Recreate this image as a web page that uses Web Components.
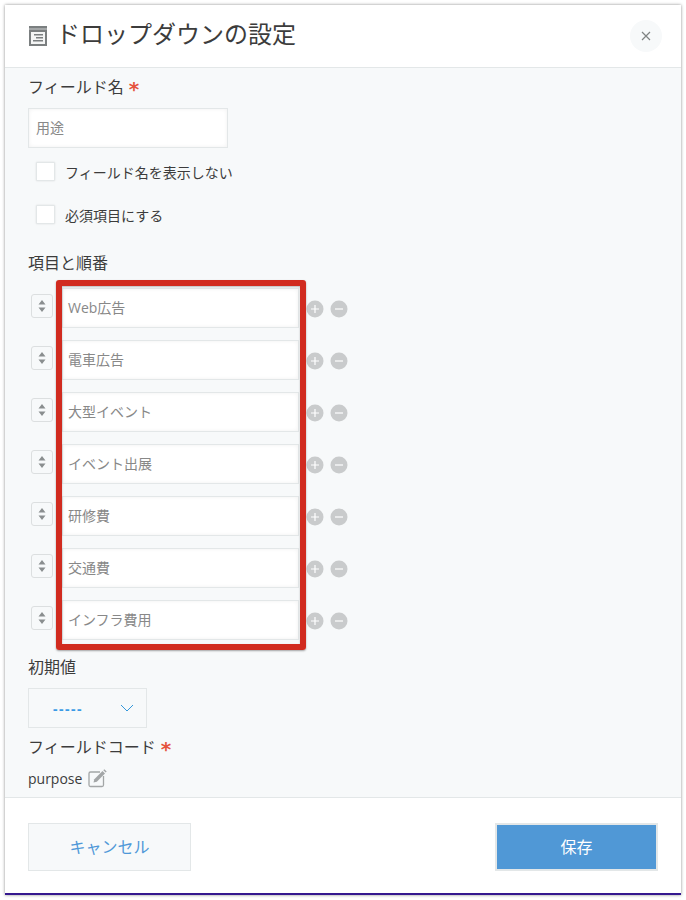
<!DOCTYPE html>
<html lang="ja">
<head>
<meta charset="utf-8">
<title>ドロップダウンの設定</title>
<style>
html, body { margin: 0; background: #fff; }
body {
    padding: 5px;
    width: 676px;
    font-family: "Open Sans", "Noto Sans CJK JP", sans-serif;
    color: #3c3c3c;
}
</style>
</head>
<body>
<settings-dialog heading="ドロップダウンの設定">
    <field-label required>フィールド名</field-label>
    <text-box style="--w:200px;--mt:8px">用途</text-box>
    <check-row style="--mt:14px">フィールド名を表示しない</check-row>
    <check-row style="--mt:24px">必須項目にする</check-row>
    <field-label style="--mt:28px">項目と順番</field-label>
    <option-list style="--mt:12px">
        <option-row>Web広告</option-row>
        <option-row>電車広告</option-row>
        <option-row>大型イベント</option-row>
        <option-row>イベント出展</option-row>
        <option-row>研修費</option-row>
        <option-row>交通費</option-row>
        <option-row>インフラ費用</option-row>
    </option-list>
    <field-label style="--mt:16px">初期値</field-label>
    <select-box style="--mt:8px">-----</select-box>
    <field-label required style="--mt:8px">フィールドコード</field-label>
    <code-row style="--mt:7px">purpose</code-row>
    <action-button slot="footer">キャンセル</action-button>
    <action-button slot="footer" primary>保存</action-button>
</settings-dialog>

<script>
const tpl = (html) => {
    const el = document.createElement('template');
    el.innerHTML = html;
    return el;
};

class Base extends HTMLElement {
    constructor() {
        super();
        this.attachShadow({ mode: 'open' });
        this.shadowRoot.appendChild(this.constructor.template.content.cloneNode(true));
    }
}

class SettingsDialog extends Base {
    static template = tpl(`
<style>
:host {
    display: flex;
    flex-direction: column;
    box-sizing: border-box;
    height: 890px;
    background: #fff;
    box-shadow: 0 0 3px rgba(0,0,0,.45);
    border-bottom: 2px solid #35188f;
}
header {
    height: 63px;
    box-sizing: border-box;
    display: flex;
    align-items: center;
    padding: 0 19px 0 24px;
    border-bottom: 1px solid #e3e7e8;
    flex: none;
}
h1 {
    margin: 0 0 0 9px;
    font-size: 24px;
    font-weight: 400;
    line-height: 32px;
    flex: 1;
    position: relative;
    top: -2px;
}
.close {
    width: 32px;
    height: 32px;
    border-radius: 50%;
    background: #f7f9fa;
    display: flex;
    align-items: center;
    justify-content: center;
}
main {
    flex: 1;
    background: #f7f9fa;
    padding: 8px 23px 0;
    overflow: hidden;
}
footer {
    height: 96px;
    flex: none;
    box-sizing: border-box;
    border-top: 1px solid #e3e7e8;
    display: flex;
    justify-content: space-between;
    padding: 25px 23px 0;
}
</style>
<header>
    <svg width="18" height="20" viewBox="0 0 18 20">
        <rect width="18" height="20" fill="#7b7f80"/>
        <rect x="0" y="2" width="18" height="2" fill="#a4a7a8"/>
        <rect x="2" y="6" width="14" height="12" fill="#f4f5f5"/>
        <rect x="5" y="8" width="9" height="1.500" fill="#7b7f80"/>
        <rect x="7" y="11" width="7" height="1.500" fill="#7b7f80"/>
        <rect x="4" y="14" width="10" height="1.500" fill="#7b7f80"/>
    </svg>
    <h1></h1>
    <div class="close">
        <svg width="10" height="10" viewBox="0 0 10 10"><path d="M1 1l8 8M9 1l-8 8" stroke="#7f8383" stroke-width="1.200" fill="none"/></svg>
    </div>
</header>
<main><slot></slot></main>
<footer><slot name="footer"></slot></footer>
`);
    connectedCallback() {
        this.shadowRoot.querySelector('h1').textContent = this.getAttribute('heading');
    }
}

class FieldLabel extends Base {
    static template = tpl(`
<style>
:host { display: block; box-sizing: border-box; height: 24px; margin-top: var(--mt, 0); font-size: 16px; line-height: 22px; }
.req { display: none; color: #e5533d; margin-left: 5px; font: 700 20px/20px "DejaVu Sans", sans-serif; vertical-align: -3px; }
:host([required]) .req { display: inline; }
</style>
<slot></slot><span class="req">*</span>
`);
}

class TextBox extends Base {
    static template = tpl(`
<style>
:host {
    display: block;
    box-sizing: border-box;
    width: var(--w, 237px);
    height: 40px;
    margin-top: var(--mt, 0);
    background: #fff;
    border: 1px solid #e3e7e8;
    box-shadow: inset 0 0 4px rgba(0,0,0,.06);
    padding: 0 var(--pad, 7px);
    font-size: 14px;
    line-height: 38px;
    color: #888;
}
</style>
<slot></slot>
`);
}

class CheckRow extends Base {
    static template = tpl(`
<style>
:host {
    display: flex;
    align-items: center;
    height: 19px;
    margin-top: var(--mt, 0);
    padding-left: 8px;
    font-size: 14px;
}
i {
    width: 19px;
    height: 19px;
    box-sizing: border-box;
    background: #fff;
    border: 1px solid #e3e7e8;
    border-radius: 1px;
    margin-right: 10px;
    box-shadow: 0 0 2px rgba(0,0,0,.12);
}
</style>
<i></i><slot></slot>
`);
}

class OptionList extends Base {
    static template = tpl(`
<style>
:host { display: block; position: relative; margin-top: var(--mt, 0); }
.mark {
    position: absolute;
    left: 28px;
    top: -8px;
    width: 250px;
    height: 370px;
    box-sizing: border-box;
    border: 6px solid #d12b1f;
    border-radius: 3px;
    box-shadow: 0 1px 2px rgba(0,0,0,.35), inset 0 1px 2px rgba(0,0,0,.25);
    pointer-events: none;
}
.rows { display: flex; flex-direction: column; gap: 12px; }
</style>
<div class="rows"><slot></slot></div>
<div class="mark"></div>
`);
}

class OptionRow extends Base {
    static template = tpl(`
<style>
:host { display: flex; align-items: center; height: 40px; padding-left: 3px; }
.step {
    width: 22px;
    height: 24px;
    box-sizing: border-box;
    border: 1px solid #dcdfe0;
    border-radius: 3px;
    background: #f7f9fa;
    display: flex;
    align-items: center;
    justify-content: center;
    margin: 0 9px 4px 0;
    flex: none;
}
text-box { flex: none; }
.round { margin: 2px 0 0 6px; flex: none; display: block; }
.first { margin-left: 7px; }
</style>
<div class="step">
    <svg width="10" height="14" viewBox="0 0 10 14"><path d="M5 1l3.500 4.500h-7zM5 13L1.500 8.500h7z" fill="#8a8e8f"/></svg>
</div>
<text-box style="--w:237px;--mt:0px;--pad:5px"><slot></slot></text-box>
<svg class="round first" width="18" height="18" viewBox="0 0 18 18"><circle cx="9" cy="9" r="8.500" fill="#c9cbcc"/><path d="M5 9h8M9 5v8" stroke="#fff" stroke-width="1.200"/></svg>
<svg class="round" width="18" height="18" viewBox="0 0 18 18"><circle cx="9" cy="9" r="8.500" fill="#c9cbcc"/><path d="M5 9h8" stroke="#fff" stroke-width="1.200"/></svg>
`);
}

class SelectBox extends Base {
    static template = tpl(`
<style>
:host {
    display: flex;
    align-items: center;
    box-sizing: border-box;
    width: 119px;
    height: 40px;
    margin-top: var(--mt, 0);
    border: 1px solid #e3e7e8;
    padding: 0 12px 0 24px;
    font-size: 14px;
    font-weight: 700;
    letter-spacing: 1.500px;
    color: #3a9be6;
    justify-content: space-between;
}
</style>
<slot></slot>
<svg width="14" height="8" viewBox="0 0 14 8"><path d="M1 1l6 6 6-6" stroke="#3498db" stroke-width="1" fill="none"/></svg>
`);
}

class CodeRow extends Base {
    static template = tpl(`
<style>
:host { display: flex; align-items: center; gap: 5px; height: 22px; margin-top: var(--mt, 0); font-size: 14px; }
</style>
<slot></slot>
<svg width="20" height="20" viewBox="0 0 20 20">
    <path d="M13 4H3.500A1.500 1.500 0 0 0 2 5.500V17a1.500 1.500 0 0 0 1.500 1.500H15a1.500 1.500 0 0 0 1.500-1.500V8" stroke="#a3a6a7" stroke-width="1.300" fill="none"/>
    <path d="M6.500 14.500l.8-3.300L15.500 3l2.500 2.500-8.200 8.200z" fill="#a3a6a7"/>
    <path d="M16.300 2.200l1-1 2.400 2.400-1 1z" fill="#a3a6a7"/>
</svg>
`);
}

class ActionButton extends Base {
    static template = tpl(`
<style>
:host {
    display: flex;
    align-items: center;
    justify-content: center;
    box-sizing: border-box;
    width: 163px;
    height: 48px;
    padding-bottom: 2px;
    border: 1px solid #e3e7e8;
    background: #f7f9fa;
    font-size: 16px;
    color: #4f98d8;
}
:host([primary]) {
    border: 2px solid #e3e7e8;
    background: #5098d6;
    color: #fff;
}
</style>
<slot></slot>
`);
}

window.customElements.define('text-box', TextBox);
window.customElements.define('settings-dialog', SettingsDialog);
window.customElements.define('field-label', FieldLabel);
window.customElements.define('check-row', CheckRow);
window.customElements.define('option-list', OptionList);
window.customElements.define('option-row', OptionRow);
window.customElements.define('select-box', SelectBox);
window.customElements.define('code-row', CodeRow);
window.customElements.define('action-button', ActionButton);
</script>
</body>
</html>
